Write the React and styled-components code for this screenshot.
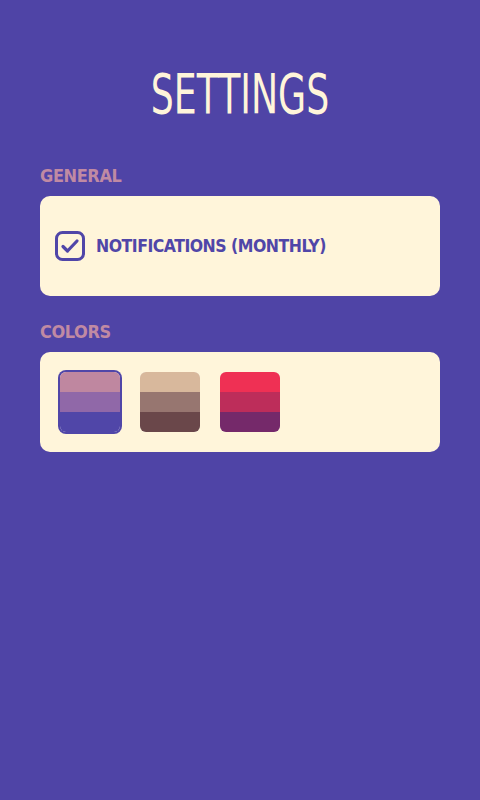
import React, { useState } from 'react';
import styled, { createGlobalStyle } from 'styled-components';

const GlobalStyle = createGlobalStyle`
    html, body {
        margin: 0;
        padding: 0;
        background-color: #4f44a6;
    }
    body {
        font-family: "DejaVu Sans Condensed", "Liberation Sans", sans-serif;
    }
`;

const Page = styled.div`
    width: 480px;
    min-height: 800px;
    box-sizing: border-box;
    padding: 0 40px;
    background-color: #4f44a6;
`;

const Title = styled.h1`
    margin: 0;
    padding-top: 63px;
    height: 62px;
    text-align: center;
    font-weight: 400;
    font-size: 56px;
    line-height: 62px;
    color: #fff5da;
    transform: scaleX(0.72);
`;

const SectionLabel = styled.h2`
    margin: ${(p) => (p.first ? '40px' : '25px')} 0 9px;
    font-size: 18px;
    line-height: 22px;
    font-weight: 700;
    letter-spacing: -0.4px;
    color: #c08aa3;
`;

const Card = styled.div`
    height: 100px;
    box-sizing: border-box;
    background-color: #fff5da;
    border-radius: 10px;
    display: flex;
    align-items: center;
    padding: 0 20px 0 15px;
    gap: 11px;
`;

const SwatchCard = styled(Card)`
    align-items: flex-start;
    padding: 20px;
    gap: 20px;
`;

const CheckLabel = styled.label`
    display: flex;
    align-items: center;
    gap: 11px;
    cursor: pointer;
    font-size: 17.5px;
    font-weight: 700;
    letter-spacing: -0.5px;
    color: #5046a8;
`;

const Swatch = styled.button`
    width: 60px;
    height: 60px;
    padding: 0;
    border: none;
    border-radius: 6px;
    overflow: hidden;
    display: flex;
    flex-direction: column;
    cursor: pointer;
    box-shadow: ${(p) => (p.selected ? '0 0 0 2px #5046a8' : 'none')};
`;

const Stripe = styled.span`
    flex: 1;
    background-color: ${(p) => p.color};
`;

const CheckIcon = ({ checked }) => (
    <svg width="30" height="30" viewBox="0 0 30 30">
        <rect x="1.5" y="1.5" width="27" height="27" rx="6" fill="none" stroke="#5046a8" strokeWidth="3" />
        {checked && (
            <path d="M8 15.5 L12.5 20 L22 10" fill="none" stroke="#5046a8" strokeWidth="3.2" strokeLinecap="round" strokeLinejoin="round" />
        )}
    </svg>
);

const palettes = [
    ['#bf87a0', '#9068a8', '#5046a8'],
    ['#d8b89c', '#977670', '#6a474a'],
    ['#ef3054', '#bd2d5a', '#75296a'],
];

const App = () => {
    const [monthly, setMonthly] = useState(true);
    const [palette, setPalette] = useState(0);

    return (
        <Page>
            <GlobalStyle />
            <Title>SETTINGS</Title>

            <SectionLabel first>GENERAL</SectionLabel>
            <Card>
                <CheckLabel onClick={() => setMonthly(!monthly)}>
                    <CheckIcon checked={monthly} />
                    NOTIFICATIONS (MONTHLY)
                </CheckLabel>
            </Card>

            <SectionLabel>COLORS</SectionLabel>
            <SwatchCard>
                {palettes.map((colors, i) => (
                    <Swatch key={i} selected={palette === i} onClick={() => setPalette(i)}>
                        {colors.map((c) => (
                            <Stripe key={c} color={c} />
                        ))}
                    </Swatch>
                ))}
            </SwatchCard>
        </Page>
    );
};

export default App;
